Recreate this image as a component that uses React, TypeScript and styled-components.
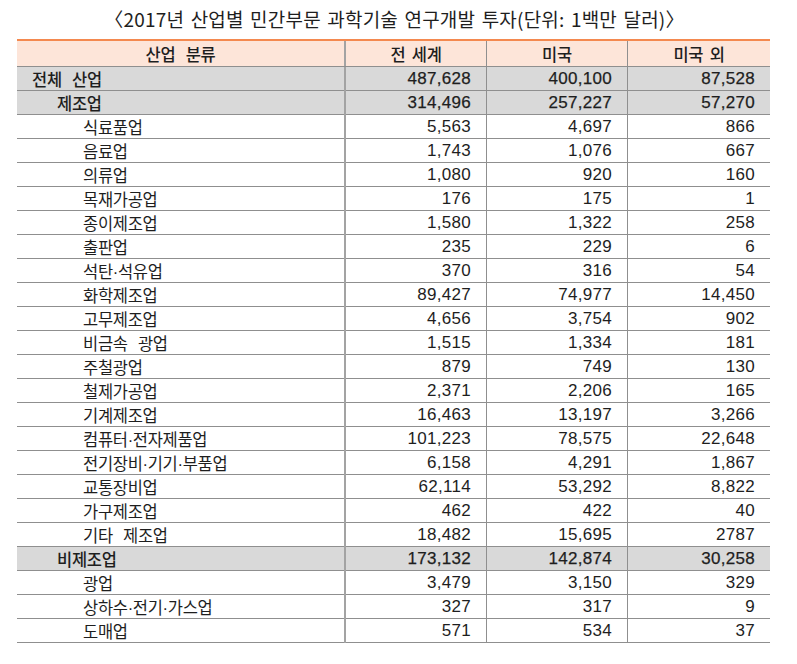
import React from "react";
import styled, { createGlobalStyle } from "styled-components";

const Global = createGlobalStyle`
  html, body { margin: 0; padding: 0; background: #ffffff; }
  body { font-family: "Liberation Sans", "Noto Sans CJK KR", sans-serif; color: #1e1e1e; }
`;

const Page = styled.div`
  width: 797px;
  padding-top: 8px;
  display: flex;
  flex-direction: column;
  align-items: flex-start;
`;

const Title = styled.div`
  align-self: stretch;
  text-align: center;
  padding-right: 8px;
  font-family: "Noto Sans CJK KR", sans-serif;
  font-size: 19px;
  line-height: 22px;
  height: 22px;
  letter-spacing: 0.2px;
  word-spacing: 2px;
  color: #1e1e1e;
  margin-bottom: 9px;
  white-space: nowrap;
`;

const Table = styled.div`
  width: 753px;
  margin-left: 17px;
  border-top: 2px solid #f4894f;
  display: flex;
  flex-direction: column;
`;

type Kind = "header" | "group" | "item";

const Row = styled.div<{ $kind: Kind }>`
  display: grid;
  grid-template-columns: 327px 142px 141px 143px;
  height: ${(p) => (p.$kind === "header" ? "25px" : "23px")};
  border-bottom: 1px solid #8f8f8f;
  background: ${(p) =>
    p.$kind === "header" ? "#fde5d9" : p.$kind === "group" ? "#d9d9d9" : "#ffffff"};
`;

const LabelCell = styled.div<{ $level: number; $kind: Kind }>`
  display: flex;
  align-items: center;
  justify-content: ${(p) => (p.$kind === "header" ? "center" : "flex-start")};
  padding-left: ${(p) => (p.$kind === "header" ? 0 : [15, 40, 66][p.$level])}px;
  font-family: "Liberation Sans", "Noto Sans CJK KR", sans-serif;
  font-size: 16.5px;
  font-weight: ${(p) => (p.$kind === "item" ? 400 : 500)};
  letter-spacing: -0.3px;
  word-spacing: 6px;
  white-space: nowrap;
`;

const NumCell = styled.div<{ $first: boolean; $kind: Kind }>`
  display: flex;
  align-items: center;
  justify-content: ${(p) => (p.$kind === "header" ? "center" : "flex-end")};
  padding-right: ${(p) => (p.$kind === "header" ? 0 : 15)}px;
  border-left: ${(p) => (p.$first ? "2px solid #a3a3a3" : "1px solid #8f8f8f")};
  font-family: ${(p) =>
    p.$kind === "header"
      ? '"Noto Sans CJK KR", sans-serif'
      : '"Liberation Sans", "Noto Sans CJK KR", sans-serif'};
  font-size: ${(p) => (p.$kind === "header" ? "16.5px" : "17px")};
  font-weight: ${(p) => (p.$kind === "header" ? 500 : 400)};
  -webkit-text-stroke: ${(p) => (p.$kind === "group" ? "0.25px #1e1e1e" : "0")};
  letter-spacing: ${(p) => (p.$kind === "header" ? "-0.3px" : "0.3px")};
  word-spacing: 3px;
  white-space: nowrap;
`;

type Line = { label: string; level: number; kind: Kind; v: [string, string, string] };

const rows: Line[] = [
  { label: "전체 산업", level: 0, kind: "group", v: ["487,628", "400,100", "87,528"] },
  { label: "제조업", level: 1, kind: "group", v: ["314,496", "257,227", "57,270"] },
  { label: "식료품업", level: 2, kind: "item", v: ["5,563", "4,697", "866"] },
  { label: "음료업", level: 2, kind: "item", v: ["1,743", "1,076", "667"] },
  { label: "의류업", level: 2, kind: "item", v: ["1,080", "920", "160"] },
  { label: "목재가공업", level: 2, kind: "item", v: ["176", "175", "1"] },
  { label: "종이제조업", level: 2, kind: "item", v: ["1,580", "1,322", "258"] },
  { label: "출판업", level: 2, kind: "item", v: ["235", "229", "6"] },
  { label: "석탄·석유업", level: 2, kind: "item", v: ["370", "316", "54"] },
  { label: "화학제조업", level: 2, kind: "item", v: ["89,427", "74,977", "14,450"] },
  { label: "고무제조업", level: 2, kind: "item", v: ["4,656", "3,754", "902"] },
  { label: "비금속 광업", level: 2, kind: "item", v: ["1,515", "1,334", "181"] },
  { label: "주철광업", level: 2, kind: "item", v: ["879", "749", "130"] },
  { label: "철제가공업", level: 2, kind: "item", v: ["2,371", "2,206", "165"] },
  { label: "기계제조업", level: 2, kind: "item", v: ["16,463", "13,197", "3,266"] },
  { label: "컴퓨터·전자제품업", level: 2, kind: "item", v: ["101,223", "78,575", "22,648"] },
  { label: "전기장비·기기·부품업", level: 2, kind: "item", v: ["6,158", "4,291", "1,867"] },
  { label: "교통장비업", level: 2, kind: "item", v: ["62,114", "53,292", "8,822"] },
  { label: "가구제조업", level: 2, kind: "item", v: ["462", "422", "40"] },
  { label: "기타 제조업", level: 2, kind: "item", v: ["18,482", "15,695", "2787"] },
  { label: "비제조업", level: 1, kind: "group", v: ["173,132", "142,874", "30,258"] },
  { label: "광업", level: 2, kind: "item", v: ["3,479", "3,150", "329"] },
  { label: "상하수·전기·가스업", level: 2, kind: "item", v: ["327", "317", "9"] },
  { label: "도매업", level: 2, kind: "item", v: ["571", "534", "37"] },
];

export default function App() {
  return (
    <Page>
      <Global />
      <Title>〈2017년 산업별 민간부문 과학기술 연구개발 투자(단위: 1백만 달러)〉</Title>
      <Table>
        <Row $kind="header">
          <LabelCell $level={0} $kind="header">산업 분류</LabelCell>
          <NumCell $first $kind="header">전 세계</NumCell>
          <NumCell $first={false} $kind="header">미국</NumCell>
          <NumCell $first={false} $kind="header">미국 외</NumCell>
        </Row>
        {rows.map((r) => (
          <Row key={r.label} $kind={r.kind}>
            <LabelCell $level={r.level} $kind={r.kind}>{r.label}</LabelCell>
            {r.v.map((n, i) => (
              <NumCell key={i} $first={i === 0} $kind={r.kind}>{n}</NumCell>
            ))}
          </Row>
        ))}
      </Table>
    </Page>
  );
}
